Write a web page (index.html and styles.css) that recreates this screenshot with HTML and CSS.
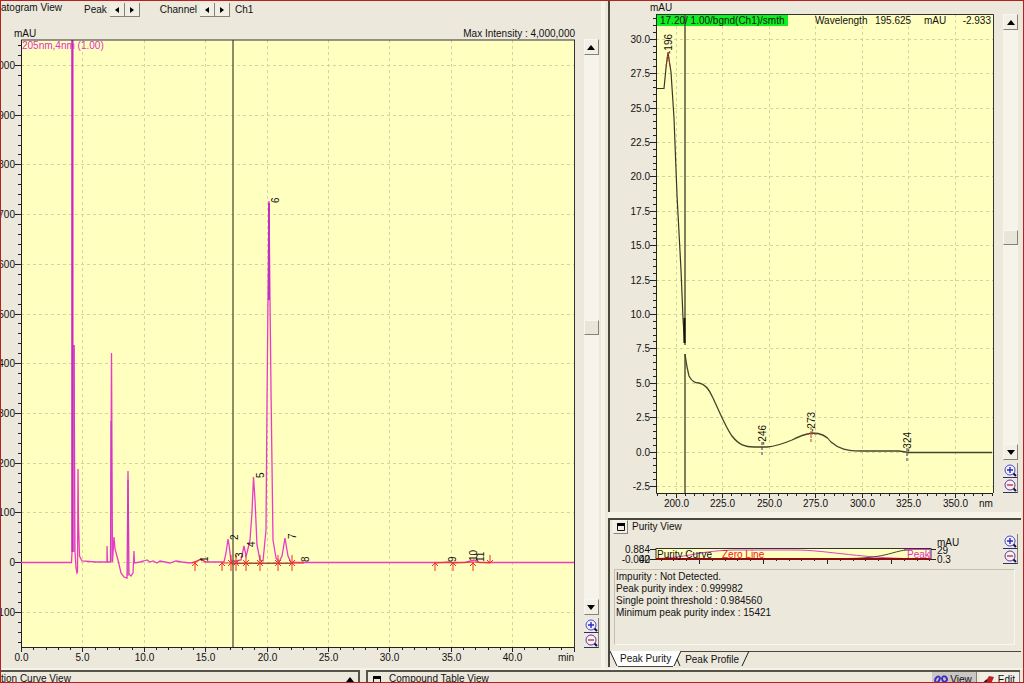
FILE: index.html
```html
<!DOCTYPE html>
<html lang="en">
<head>
<meta charset="utf-8">
<title>Chromatogram View</title>
<link rel="stylesheet" href="styles.css">
</head>
<body>
<svg class="sprite" aria-hidden="true">
  <defs>
    <symbol id="up" viewBox="0 0 8 5"><path d="M0 5L4 0L8 5Z"/></symbol>
    <symbol id="down" viewBox="0 0 8 5"><path d="M0 0H8L4 5Z"/></symbol>
    <symbol id="left" viewBox="0 0 4 6"><path d="M4 0V6L0 3Z"/></symbol>
    <symbol id="right" viewBox="0 0 4 6"><path d="M0 0V6L4 3Z"/></symbol>
    <symbol id="plus" viewBox="0 0 14 14"><circle cx="7" cy="7" r="5" fill="#f4f2f4" stroke="#4a48c8"/><path d="M4 7H10M7 4V10" stroke="#2828c8" stroke-width="1.4"/><path d="M10.500 10.500L13 13" stroke="#101050" stroke-width="2"/></symbol>
    <symbol id="minus" viewBox="0 0 14 14"><circle cx="7" cy="7" r="5" fill="#f6f0f0" stroke="#5a3a98"/><path d="M4 7H10" stroke="#c03050" stroke-width="1.4"/><path d="M10.500 10.500L13 13" stroke="#101050" stroke-width="2"/></symbol>
    <symbol id="window" viewBox="0 0 8 8"><path d="M.5 1V7.500H7.500V1" fill="none" stroke="#111"/><path d="M0 0H8V3H0Z"/></symbol>
    <g id="start" fill="none" stroke="#f03018"><path d="M0 0V9M-3 4L0 1L3 4"/></g>
    <g id="end" fill="none" stroke="#f03018"><path d="M0 0V-8M-3 -3L0 0L3 -3"/></g>
  </defs>
</svg>
<div class="app">
  <main class="workspace">
    <section class="chrom">
      <header class="toolbar">
        <h2 class="title">atogram View</h2>
        <div class="stepper peak"><span>Peak</span><button class="step" aria-label="Previous peak"><svg><use href="#left"/></svg></button><button class="step" aria-label="Next peak"><svg><use href="#right"/></svg></button></div>
        <div class="stepper channel"><span>Channel</span><button class="step" aria-label="Previous channel"><svg><use href="#left"/></svg></button><button class="step" aria-label="Next channel"><svg><use href="#right"/></svg></button><span class="current">Ch1</span></div>
      </header>
      <div class="chart-row">
        <svg class="chart" viewBox="1 27 582 641">
          <rect x="21" y="40" width="553" height="607" fill="#ffffbf"/>
          <g id="chrom-axes"></g>
          <path class="signal" d="M21 562.500H71.500L72 552V40M74 345L75 552L76 568L77 573L77.500 572L78 469L78.500 523L79.500 556L82 561L96 562L107 562V546L107.500 562H110.500L111.500 353L112.500 562L114 537L115 549L118 560L121 573L124 577L127 578L128 471L129 574L131 576L133 573L134 551L134.500 563L140 562L144 561L147 560L150 562L153 561L157 563L160 561L170 563L176 561L182 562L190 563L196 562L201 559L205 562L215 562L224 562L226 553L228 539L229 545L231 561L236 561L241 560L244 546L246 556L247 553L250 540L252 512L253.500 477L255 500L257 545L260 560L263 561L266 530L267 403L268 298L269 201L270 300L271 390L273 540L276 558L279 562L282 556L285 538L288 556L291 562.500H452L460 562.500H465L474 560L480 562.500H574"/>
          <path d="M72.500 40V552" stroke="#c828c8" stroke-width="2"/>
          <path d="M74 345V552M111 421V562M128 480V576M268.500 203V300M269.500 203V300" stroke="#c030c8" fill="none"/>
          <path d="M192 563L201 559L206 562M222 563H304M436 563L448 562L453 563L474 562L490 563" stroke="#f03018" fill="none"/>
          <path d="M231 563.500H292" stroke="#806040"/>
          <g>
            <use href="#start" x="195" y="562"/><use href="#start" x="222" y="562"/><use href="#start" x="231" y="562"/><use href="#start" x="236" y="562"/><use href="#start" x="246" y="562"/><use href="#start" x="260" y="562"/><use href="#start" x="278" y="562"/><use href="#start" x="292" y="562"/><use href="#start" x="435" y="562"/><use href="#start" x="453" y="562"/><use href="#start" x="473" y="562"/>
            <use href="#end" x="231" y="563"/><use href="#end" x="236" y="563"/><use href="#end" x="246" y="563"/><use href="#end" x="260" y="563"/><use href="#end" x="278" y="563"/><use href="#end" x="292" y="563"/><use href="#end" x="490" y="563"/>
          </g>
          <path d="M233 40V647" stroke="#66664a" stroke-width="1.500"/>
          <path d="M574.500 40V648M21 40H575" stroke="#333" fill="none"/>
          <g class="label">
            <text transform="translate(208 562) rotate(-90)">1</text>
            <text transform="translate(238 540) rotate(-90)">2</text>
            <text transform="translate(243 558) rotate(-90)">3</text>
            <text transform="translate(255 547) rotate(-90)">4</text>
            <text transform="translate(264 478) rotate(-90)">5</text>
            <text transform="translate(279 203) rotate(-90)">6</text>
            <text transform="translate(296 539) rotate(-90)">7</text>
            <text transform="translate(309 562) rotate(-90)">8</text>
            <text transform="translate(456 562) rotate(-90)">9</text>
            <text transform="translate(477 561) rotate(-90)">10</text>
            <text transform="translate(484 562) rotate(-90)">11</text>
            <text x="14" y="37">mAU</text>
            <text x="558" y="661">min</text>
            <text x="575" y="37" text-anchor="end">Max Intensity : 4,000,000</text>
          </g>
          <text class="label magenta" x="22" y="49">205nm,4nm (1.00)</text>
        </svg>
        <div class="side">
          <button class="square" aria-label="Scroll up"><svg class="arrow"><use href="#up"/></svg></button>
          <input class="scroll" type="range" aria-label="Intensity range" min="0" max="100" value="50">
          <button class="square" aria-label="Scroll down"><svg class="arrow"><use href="#down"/></svg></button>
          <button class="zoom first" aria-label="Zoom in"><svg><use href="#plus"/></svg></button>
          <button class="zoom" aria-label="Zoom out"><svg><use href="#minus"/></svg></button>
        </div>
      </div>
    </section>
    <div class="right">
      <section class="spectrum">
        <svg class="chart" viewBox="611 1 388 511">
          <rect x="658" y="14" width="336" height="479" fill="#ffffbf"/>
          <g id="spec-axes"></g>
          <rect x="658" y="15" width="131" height="11" fill="#10f020"/>
          <path d="M686 14V345M686 354V493" stroke="#55553c" stroke-width="1.500"/>
          <path d="M658 88.500H665L667 68L669 53L672 72L675 118L678 195L682 270L684 318L685.500 343" fill="none" stroke="#3c3820" stroke-width="1.200"/>
          <path d="M685.500 318V343" stroke="#111" stroke-width="2"/>
          <path d="M686 354L688 367L690 376C693 382 696 383 700 383C707 384 711 391 714 398C721 413 727 428 733 436C740 445 746 447 755 447H768C779 446 786 443 793 440C801 436 806 434 813 433C822 433 828 436 832 442C840 449 848 451 862 451H900L910 452.500H993" fill="none" stroke="#45452d" stroke-width="1.300"/>
          <path d="M669 52L667 66M669 52L671 66M812 427V443M807 434H819" stroke="#b04038" stroke-dasharray="3 1"/>
          <path d="M763 442V457M908 448V461" stroke="#303070" stroke-dasharray="3 2"/>
          <path d="M658 14.500H994.500V493" stroke="#333" fill="none"/>
          <g class="label">
            <text x="651" y="11">mAU</text><text x="980" y="507">nm</text>
            <text transform="translate(673 54) rotate(-90)">-196</text>
            <text transform="translate(767 445) rotate(-90)">-246</text>
            <text transform="translate(816 432) rotate(-90)">-273</text>
            <text transform="translate(912 452) rotate(-90)">-324</text>
            <text x="661" y="24">17.20/ 1.00/bgnd(Ch1)/smth</text>
            <text x="816" y="24">Wavelength</text><text x="876" y="24">195.625</text><text x="925" y="24">mAU</text><text x="992" y="24" text-anchor="end">-2.933</text>
          </g>
        </svg>
        <div class="side">
          <button class="square" aria-label="Scroll up"><svg class="arrow"><use href="#up"/></svg></button>
          <input class="scroll" type="range" aria-label="Absorbance range" min="0" max="100" value="50">
          <button class="square" aria-label="Scroll down"><svg class="arrow"><use href="#down"/></svg></button>
          <button class="zoom first" aria-label="Zoom in"><svg><use href="#plus"/></svg></button>
          <button class="zoom" aria-label="Zoom out"><svg><use href="#minus"/></svg></button>
        </div>
      </section>
      <section class="purity">
        <header class="purity-head"><button class="square restore" aria-label="Restore view"><svg><use href="#window"/></svg></button><h2 class="title">Purity View</h2></header>
        <div class="purity-chart">
          <svg class="chart" viewBox="611 535 388 33">
            <rect x="657" y="549.500" width="275" height="11" fill="#ffffbf" stroke="#333"/>
            <path d="M651 550.500H657M651 560.500H657M932 550.500H937M932 560.500H937" stroke="#222"/>
            <g id="purity-axis"></g>
            <path d="M657 559.500C690 559 700 551 740 551H795C830 551 860 560 932 560" fill="none" stroke="#e040c8"/>
            <path d="M657 559.500H850C890 559 895 551 910 551" fill="none" stroke="#444430"/>
            <path d="M657 560H932" stroke="#8a1010" stroke-width="2"/>
            <path d="M905 550.500H931V560" stroke="#e040c8" fill="none"/>
            <g class="label">
              <text x="651" y="554" text-anchor="end">0.884</text><text x="651" y="564" text-anchor="end">-0.002</text><text x="651" y="564" text-anchor="end">40</text>
              <text x="658" y="559">Purity Curve</text><text class="red" x="723" y="559">Zero Line</text><text class="magenta" x="908" y="559">Peak</text>
              <text x="938" y="547">mAU</text><text x="938" y="555">29</text><text x="938" y="564">0.3</text>
            </g>
          </svg>
          <div class="side"><button class="zoom" aria-label="Zoom in"><svg><use href="#plus"/></svg></button><button class="zoom" aria-label="Zoom out"><svg><use href="#minus"/></svg></button></div>
        </div>
        <div class="result">
          <p>Impurity : Not Detected.</p>
          <p>Peak purity index : 0.999982</p>
          <p>Single point threshold : 0.984560</p>
          <p>Minimum peak purity index : 15421</p>
        </div>
        <nav class="tabs">
          <svg class="slant" viewBox="0 0 8 16"><path d="M0 0L7 15H8V0Z" fill="#fff"/><path d="M0 0L7 15" stroke="#222"/></svg>
          <button class="tab active">Peak Purity</button>
          <svg class="slant" viewBox="0 0 8 16"><path d="M0 0H8L1 15H0Z" fill="#fff"/><path d="M8 0L1 15M4 8L7 15" stroke="#222"/></svg>
          <button class="tab">Peak Profile</button>
          <svg class="slant" viewBox="0 0 8 16"><path d="M0 .5H8" stroke="#4a483e"/><path d="M8 0L1 15" stroke="#222"/></svg>
          <span class="tab-line"></span>
        </nav>
      </section>
    </div>
  </main>
  <footer class="dock">
    <section class="dock-panel curve"><h2 class="title">tion Curve View</h2><svg class="arrow"><use href="#up"/></svg></section>
    <section class="dock-panel compound">
      <svg class="dock-icon"><use href="#window"/></svg><h2 class="title">Compound Table View</h2>
      <div class="modes">
        <button class="mode pressed"><svg viewBox="0 0 14 9"><path d="M1 6C1 2 5 0 6 3C5 7 3 9 1 6M8 3C9 0 13 1 13 5C11 8 8 7 8 3" fill="none" stroke="#4030c0" stroke-width="2"/></svg>View</button>
        <button class="mode"><svg viewBox="0 0 14 9"><path d="M2 9L7 1L12 2L9 9Z" fill="#c02020"/><path d="M1 9L5 5" stroke="#222" stroke-width="2"/></svg>Edit</button>
      </div>
    </section>
  </footer>
</div>
<script src="charts.js"></script>
</body>
</html>
```
FILE: styles.css
```css
* { box-sizing: border-box; }
body { margin: 0; background: #ece8db; color: #111; font: 10px/12px "Liberation Sans", Arial, sans-serif; }
button { margin: 0; padding: 0; border: 0; background: none; color: inherit; font: inherit; }
.sprite { position: absolute; width: 0; height: 0; }
.app { display: flex; flex-direction: column; height: 100vh; overflow: hidden; border: 1px solid #b82020; }
.workspace { display: grid; grid-template-columns: minmax(0, 604fr) minmax(0, 418fr); flex: none; }
.title { margin: 0; font: inherit; white-space: nowrap; }

.chrom { display: flex; flex-direction: column; border-right: 4px solid #f6f3e9; }
.toolbar { display: flex; height: 26px; padding-top: 1px; align-items: flex-start; }
.stepper { display: flex; align-items: center; height: 16px; }
.peak { margin-left: 22px; }
.channel { margin-left: 20px; }
.step { display: grid; place-items: center; width: 15px; height: 14px; border-right: 1px solid #858278; border-bottom: 1px solid #858278; background: #f1eee3; }
.stepper span + .step { margin-left: 3px; }
.step svg { width: 4px; height: 6px; }
.current { margin-left: 5px; }
.chart-row, .spectrum, .purity-chart { display: grid; grid-template-columns: minmax(0, 1fr) 16px; }
.chart-row { padding-right: 2px; }
.chart { display: block; width: 100%; height: auto; }
.side { display: flex; flex-direction: column; align-items: center; }
.chart-row .side { padding: 12px 0 20px; }
.square { display: grid; place-items: center; flex: none; width: 15px; height: 16px; background: #f2efe6; border: 1px solid #f8f6f0; border-right-color: #858278; border-bottom-color: #858278; }
.arrow { width: 8px; height: 5px; }
.scroll { appearance: none; writing-mode: vertical-lr; flex: 1; min-height: 0; width: 15px; margin: 0; background: #f5f3ea; }
.scroll::-webkit-slider-thumb { appearance: none; width: 15px; height: 15px; border: 1px solid #f8f6f0; border-right-color: #858278; border-bottom-color: #858278; background: #e9e5d9; }
.zoom { flex: none; width: 15px; height: 15px; border-right: 1px solid #858278; border-bottom: 1px solid #30305a; background: #eeeae2; }
.zoom svg { display: block; width: 14px; height: 14px; }
.zoom.first { margin-top: 3px; }

.label { font-size: 10px; fill: #111; }
.magenta { fill: #e030c8; }
.red { fill: #f02010; }
.signal { fill: none; stroke: #e83cc8; stroke-width: 1.3; }
.grid { stroke: #d6d2a2; stroke-dasharray: 3 3; fill: none; }
.axis { stroke: #222; fill: none; }

.right { display: flex; flex-direction: column; padding-right: 2px; }
.spectrum, .purity { border-left: 2px solid #4a483e; margin-left: 3px; }
.spectrum { padding-right: 2px; grid-template-columns: minmax(0, 1fr) 21px; }
.spectrum .side { padding: 13px 0 19px 4px; }
.purity { margin-top: 6px; border-top: 2px solid #4a483e; box-shadow: 0 -6px #f6f3e9; }
.purity-head { display: flex; align-items: center; gap: 4px; height: 14px; padding-left: 3px; }
.restore { width: 15px; height: 14px; }
.restore svg { width: 8px; height: 8px; }
.purity-chart { grid-template-columns: minmax(0, 1fr) 21px; padding-right: 2px; }
.purity-chart .side { padding-left: 4px; }
.result { height: 76px; margin: 2px 6px 6px 4px; padding: 1px 0 0 1px; border: 1px solid #c4c0b2; border-right-color: #f8f6ee; border-bottom-color: #f8f6ee; font-size: 10px; }
.result p { margin: 0; }
.tabs { display: flex; height: 16px; }
.slant { width: 8px; height: 16px; flex: none; fill: none; }
.tab { height: 16px; padding: 0 2px 0 4px; border-top: 1px solid #4a483e; }
.tab.active { padding: 0 2px; background: #fff; border-top-color: #fff; border-bottom: 1px solid #4a483e; }
.tab-line { flex: 1; border-top: 1px solid #4a483e; }

.dock { display: flex; gap: 6px; margin-top: 2px; flex: 1; min-height: 0; padding-right: 3px; overflow: hidden; box-shadow: 0 -2px #f6f3e9; }
.dock-panel { display: flex; border-top: 2px solid #55534a; }
.curve { flex: 358; justify-content: space-between; padding-right: 4px; border-right: 2px solid #55534a; }
.curve .arrow { margin-top: 5px; }
.compound { flex: 656; padding-left: 5px; border-left: 2px solid #55534a; }
.dock-icon { width: 8px; height: 8px; margin: 4px 8px 0 0; }
.dock .title { padding-top: 1px; }
.modes { display: flex; gap: 3px; margin-left: auto; }
.mode { display: flex; align-items: center; gap: 2px; height: 14px; padding: 1px 4px 0 2px; background: #f1eee6; border-right: 1px solid #858278; }
.mode.pressed { background: #c9c6c4; }
.mode svg { width: 14px; height: 9px; }
```
FILE: charts.js
```javascript
const NS = "http://www.w3.org/2000/svg";

function add(parent, name, attrs, text) {
  const node = document.createElementNS(NS, name);
  for (const key in attrs) node.setAttribute(key, attrs[key]);
  if (text !== undefined) node.textContent = text;
  parent.appendChild(node);
}

function snap(v) { return Math.floor(v) + 0.5; }

function drawAxes(id, o) {
  const g = document.getElementById(id);
  let grid = "";
  let axis = `M${o.left + 0.5} ${o.top}V${o.bottom + 0.5}H${o.right}`;
  for (let i = o.xFrom; i <= o.xTo; i++) {
    const x = snap(o.x0 + i * o.xStep / 5);
    if (i % 5 === 0) {
      if (x > o.left + 2 && x < o.right) grid += `M${x} ${o.top}V${o.bottom}`;
      axis += `M${x} ${o.bottom}V${o.bottom + 5}`;
      const value = o.xStart + i / 5 * o.xUnit;
      if (value <= o.xLast) add(g, "text", { x: x, y: o.xLabelY, class: "label", "text-anchor": "middle" }, value.toFixed(1));
    } else {
      axis += `M${x} ${o.bottom}V${o.bottom + 3}`;
    }
  }
  for (let i = o.yFrom; i <= o.yTo; i++) {
    const y = snap(o.y0 - i * o.yStep / 5);
    if (i % 5 === 0) {
      grid += `M${o.left} ${y}H${o.right}`;
      axis += `M${o.left - 6} ${y}H${o.left}`;
      add(g, "text", { x: o.left - 6, y: y + 3, class: "label", "text-anchor": "end" }, (i / 5 * o.yUnit).toFixed(o.digits));
    } else {
      axis += `M${o.left - 3} ${y}H${o.left}`;
    }
  }
  add(g, "path", { d: grid, class: "grid" });
  add(g, "path", { d: axis, class: "axis" });
}

drawAxes("chrom-axes", {
  left: 21, right: 574, top: 40, bottom: 647,
  x0: 21.5, xStep: 61.4, xFrom: 0, xTo: 45, xStart: 0, xUnit: 5, xLast: 40, xLabelY: 661,
  y0: 562.5, yStep: 49.7, yFrom: -8, yTo: 52, yUnit: 100, digits: 0
});
drawAxes("spec-axes", {
  left: 657, right: 994, top: 14, bottom: 493,
  x0: 677, xStep: 46.5, xFrom: -2, xTo: 34, xStart: 200, xUnit: 25, xLast: 350, xLabelY: 507,
  y0: 452, yStep: 34.4, yFrom: -5, yTo: 63, yUnit: 2.5, digits: 1
});

let ticks = "";
for (let i = 0; i < 22; i++) {
  const x = snap(662 + i * 12.8);
  ticks += `M${x} 560V${i % 5 === 3 ? 565 : 562}`;
}
add(document.getElementById("purity-axis"), "path", { d: ticks, class: "axis" });
```
